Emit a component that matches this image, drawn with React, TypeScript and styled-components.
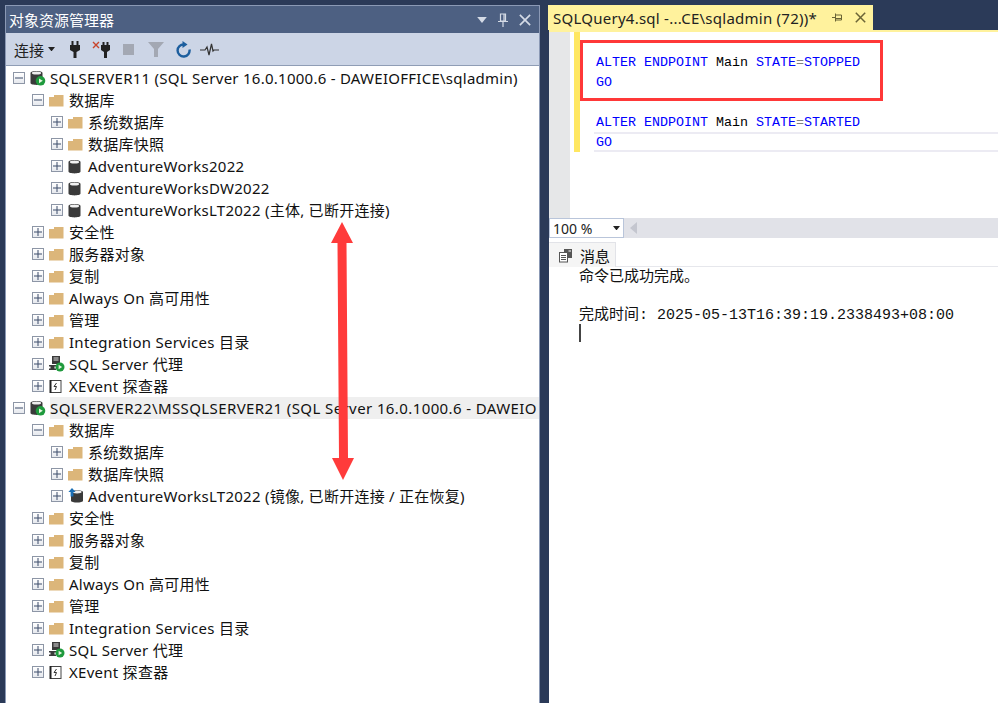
import React from "react";
import styled, { createGlobalStyle } from "styled-components";

const uiFont = `"Noto Sans", "Noto Sans CJK SC", sans-serif`;
const monoFont = `"Liberation Mono", "Noto Sans CJK SC", monospace`;

const GlobalStyle = createGlobalStyle`
  html, body {
    margin: 0;
    padding: 0;
    background: #2b3a58;
    overflow: hidden;
  }
  * { box-sizing: border-box; }
`;

const Page = styled.div`
  position: relative;
  width: 998px;
  height: 703px;
  background: #2b3a58;
  display: flex;
  padding: 5px 0 0 5px;
  gap: 8px;
  font-family: ${uiFont};
  color: #111;
  overflow: hidden;
`;

const LeftPanel = styled.div`
  width: 535px;
  height: 698px;
  flex: none;
  display: flex;
  flex-direction: column;
  border: 1px solid #8b99b5;
  border-bottom: none;
`;

const TitleBar = styled.div`
  height: 27px;
  flex: none;
  background: #4d6082;
  color: #fff;
  font-size: 15px;
  display: flex;
  align-items: center;
  padding: 0 8px 0 3px;
`;

const TitleText = styled.span`
  flex: 1;
`;

const TitleButtons = styled.div`
  display: flex;
  align-items: center;
  gap: 11px;
`;

const Toolbar = styled.div`
  height: 33px;
  flex: none;
  background: #ccd5e6;
  display: flex;
  align-items: center;
  padding-left: 8px;
  font-size: 15px;
  color: #222;
  border-bottom: 1px solid #8f9db5;
`;

const ConnectMenu = styled.div`
  display: flex;
  align-items: center;
  gap: 4px;
  margin-right: 6px;
`;

const ToolIcon = styled.div`
  width: 27px;
  height: 20px;
  display: flex;
  align-items: center;
  justify-content: center;
`;

const Tree = styled.div`
  flex: 1;
  background: #fff;
  padding-top: 1px;
  overflow: hidden;
`;

const Row = styled.div<{ $depth: number }>`
  height: 22px;
  display: flex;
  align-items: center;
  padding-left: ${(p) => 7 + p.$depth * 19}px;
  white-space: nowrap;
  font-size: 15px;
`;

const Expander = styled.span`
  width: 12px;
  height: 12px;
  flex: none;
  border: 1px solid #8d96a6;
  background: linear-gradient(#fff, #e6e9ee);
  display: flex;
  align-items: center;
  justify-content: center;
  margin-right: 5px;
`;

const NodeIcon = styled.span`
  width: 16px;
  height: 16px;
  flex: none;
  display: flex;
  align-items: center;
  justify-content: flex-start;
  margin-right: 4px;
`;

const Label = styled.span<{ $selected?: boolean }>`
  background: ${(p) => (p.$selected ? "#efefef" : "transparent")};
  height: 22px;
  line-height: 22px;
  letter-spacing: ${(p) => (p.$selected ? "0.4px" : "0.26px")};
  flex: ${(p) => (p.$selected ? 1 : "none")};
`;

const RightPanel = styled.div`
  flex: 1;
  min-width: 0;
  display: flex;
  flex-direction: column;
  margin-left: 1px;
`;

const TabStrip = styled.div`
  height: 27px;
  flex: none;
  display: flex;
  border-bottom: 2px solid #fff29d;
`;

const Tab = styled.div`
  width: 325px;
  height: 25px;
  margin-left: -1px;
  background: #fff29d;
  color: #222;
  font-size: 15px;
  letter-spacing: 0.25px;
  display: flex;
  align-items: center;
  padding: 0 7px 0 5px;
  white-space: nowrap;
`;

const TabTitle = styled.span`
  flex: 1;
`;

const TabButtons = styled.div`
  display: flex;
  align-items: center;
  gap: 12px;
`;

const Editor = styled.div`
  height: 186px;
  flex: none;
  display: flex;
  background: #fff;
`;

const Gutter = styled.div`
  width: 21px;
  flex: none;
  background: #e6e7e8;
`;

const Margin = styled.div`
  width: 24px;
  height: 120px;
  flex: none;
  padding-left: 4px;
`;

const ChangeBar = styled.div`
  width: 6px;
  height: 120px;
  background: #ffe761;
`;

const Code = styled.div`
  flex: 1;
  padding-top: 21px;
  font-family: ${monoFont};
  font-size: 13.33px;
  color: #00f;
`;

const CodeLine = styled.div`
  height: 20px;
  line-height: 20px;
  padding-left: 2px;
  white-space: pre;
`;

const CurrentLine = styled(CodeLine)`
  height: 20px;
  margin-top: -1px;
  border-top: 2px solid #ecebf3;
  border-bottom: 2px solid #ecebf3;
  line-height: 18px;
`;

const CodeGap = styled.div`
  height: 20px;
`;

const Plain = styled.span`
  color: #000;
`;

const Muted = styled.span`
  color: #808080;
`;

const ZoomBar = styled.div`
  height: 20px;
  flex: none;
  display: flex;
  background: #e1e2e8;
`;

const ZoomBox = styled.div`
  width: 75px;
  height: 20px;
  background: #fff;
  border: 1px solid #b9c5da;
  font-size: 14px;
  display: flex;
  align-items: center;
  justify-content: space-between;
  padding: 0 3px;
  color: #222;
`;

const ScrollArrow = styled.div`
  margin: 4px 0 0 6px;
  width: 0;
  height: 0;
  border-top: 6px solid transparent;
  border-bottom: 6px solid transparent;
  border-right: 7px solid #c4c6cf;
`;

const ResultTabs = styled.div`
  height: 29px;
  flex: none;
  padding-top: 4px;
  background: #fff;
  border-bottom: 1px solid #e6e7ec;
  display: flex;
`;

const ResultTab = styled.div`
  width: 67px;
  height: 25px;
  background: #f5f5f5;
  border-right: 1px solid #e2e3e8;
  border-top: 1px solid #e2e3e8;
  display: flex;
  align-items: center;
  gap: 7px;
  padding-left: 9px;
  font-size: 15px;
`;

const Results = styled.div`
  flex: 1;
  background: #fff;
  padding: 1px 0 0 30px;
  font-family: ${monoFont};
  font-size: 15px;
  color: #111;
`;

const ResultLine = styled.div`
  height: 19px;
  line-height: 19px;
  white-space: pre;
`;

const ResultSpacer = styled.div`
  height: 19px;
`;

const Caret = styled.div`
  width: 2px;
  height: 18px;
  margin-top: -1px;
  background: #444;
`;

const HighlightBox = styled.div`
  position: absolute;
  left: 580px;
  top: 40px;
  width: 303px;
  height: 61px;
  border: 3px solid #ff3838;
`;

const ArrowOverlay = styled.svg`
  position: absolute;
  left: 325px;
  top: 220px;
`;

const PlusMinus = ({ open }: { open: boolean }) => (
  <svg width="8" height="8" viewBox="0 0 8 8">
    <path d="M0 4h8" stroke="#3d4c6b" fill="none" />
    {!open && <path d="M4 0v8" stroke="#3d4c6b" fill="none" />}
  </svg>
);

const FolderIcon = () => (
  <svg width="15" height="13" viewBox="0 0 15 13">
    <path d="M0 3h5V1h9.500v11.500H0z" fill="#dcb67a" />
  </svg>
);

const DbIcon = () => (
  <svg width="13" height="15" viewBox="0 0 13 15">
    <path d="M.5 3C.5 .2 12.500 .2 12.500 3v9.500c0 2.500-12 2.500-12 0z" fill="#3a3a3a" />
    <ellipse cx="6.500" cy="3" rx="4.600" ry="1.500" fill="#f2f2f2" />
  </svg>
);

const ServerIcon = () => (
  <svg width="16" height="16" viewBox="0 0 16 16">
    <path d="M.5 3C.5 .2 12.500 .2 12.500 3v10c0 2.500-12 2.500-12 0z" fill="#3a3a3a" />
    <ellipse cx="6.500" cy="3" rx="4.600" ry="1.500" fill="#eee" />
    <circle cx="10.500" cy="10.800" r="4.800" fill="#1f9a3d" />
    <path d="M9 8.500v4.700l3.800-2.350z" fill="#e8f5e0" />
  </svg>
);

const MirrorDbIcon = () => (
  <svg width="16" height="16" viewBox="0 0 16 16">
    <path d="M3 4C3 1.600 15 1.600 15 4v8.800c0 2.400-12 2.400-12 0z" fill="#3a3a3a" />
    <ellipse cx="9" cy="4" rx="4.600" ry="1.400" fill="#eee" />
    <path d="M4 0L7.600 4H5.400v4.500H2.600V4H.4z" fill="#1b6fb5" />
  </svg>
);

const AgentIcon = () => (
  <svg width="16" height="16" viewBox="0 0 16 16">
    <rect x="3" y="0" width="8" height="8" fill="#3a3a3a" />
    <path d="M4.500 2h5M4.500 4h5" stroke="#ddd" />
    <path d="M0 9h7v1.500H5.500v2H7V14H0v-1.500h1.500v-2H0z" fill="#3a3a3a" />
    <circle cx="11" cy="11" r="4.500" fill="#1f9a3d" />
    <path d="M9.600 8.800v4.400l3.500-2.200z" fill="#e8f5e0" />
  </svg>
);

const XEventIcon = () => (
  <svg width="13" height="15" viewBox="0 0 13 15">
    <rect x="1.500" y="1.500" width="10.500" height="12" fill="#fff" stroke="#444" />
    <path d="M1.500 1v13" stroke="#222" strokeWidth="2" />
    <path d="M7.500 4L5 7.500h2.500L6 11" stroke="#333" fill="none" />
  </svg>
);

const PlugIcon = () => (
  <svg width="12" height="17" viewBox="0 0 12 17">
    <path d="M2.500 0h2v4h3V0h2v4H11v5L7.500 11v6h-3v-6L1 9V4h1.500z" fill="#222" />
  </svg>
);

const DisconnectIcon = () => (
  <svg width="20" height="17" viewBox="0 0 20 17">
    <path d="M1 1l6 6M7 1L1 7" stroke="#c8442b" strokeWidth="1.400" />
    <path d="M10.500 1h2v3h2V1h2v3H18v5l-3 2v6h-3v-6L9 9V4h1.500z" fill="#222" />
  </svg>
);

const StopIcon = () => (
  <svg width="11" height="11" viewBox="0 0 11 11">
    <rect width="11" height="11" fill="#a3a8b3" />
  </svg>
);

const FunnelIcon = () => (
  <svg width="16" height="16" viewBox="0 0 16 16">
    <path d="M0 1h16L10 8v8H6V8z" fill="#a3a8b3" />
  </svg>
);

const RefreshIcon = () => (
  <svg width="16" height="17" viewBox="0 0 16 17">
    <path d="M9 3.500a6 6 0 1 0 5.500 5" stroke="#1c5e9e" strokeWidth="2.400" fill="none" />
    <path d="M7.500 0v7l5-3.500z" fill="#1c5e9e" />
  </svg>
);

const ActivityIcon = () => (
  <svg width="19" height="13" viewBox="0 0 19 13">
    <path d="M0 7h5l2-3 2 8 2.500-11L13 8l1-1h5" stroke="#333" strokeWidth="1.200" fill="none" />
  </svg>
);

const CaretDown = ({ color, size }: { color: string; size: number }) => (
  <svg width={size} height={size / 2 + 1} viewBox="0 0 8 5">
    <path d="M0 0h8L4 5z" fill={color} />
  </svg>
);

const PinIcon = ({ color }: { color: string }) => (
  <svg width="10" height="14" viewBox="0 0 10 14">
    <path d="M2.500 1h5v7h-5zM0 8.500h10M5 9v5M6 1v7" stroke={color} fill="none" strokeWidth="1.200" />
  </svg>
);

const TabPinIcon = () => (
  <svg width="11" height="11" viewBox="0 0 11 11">
    <path d="M0 5.500h3M3.500 1.500v8M3.500 3h6v5h-6M3.500 6.500h6" stroke="#6b6436" fill="none" />
  </svg>
);

const CloseIcon = ({ color, size }: { color: string; size: number }) => (
  <svg width={size} height={size} viewBox="0 0 11 11">
    <path d="M.8 .8l9.400 9.400M10.200 .8L.8 10.200" stroke={color} strokeWidth="1.500" fill="none" />
  </svg>
);

const MessageIcon = () => (
  <svg width="15" height="15" viewBox="0 0 15 15">
    <rect x="6" y="1" width="8" height="9" fill="#555" />
    <rect x="1.500" y="4.500" width="8" height="9.500" fill="#fff" stroke="#555" />
    <path d="M3 7.500h5M3 9.500h5M3 11.500h5" stroke="#555" />
    <path d="M10.500 3h2.500" stroke="#fff" />
  </svg>
);

type Kind = "folder" | "db" | "server" | "mirror" | "agent" | "xevent";

type Node = {
  depth: number;
  open: boolean;
  kind: Kind;
  text: string;
  selected?: boolean;
};

const icons: Record<Kind, React.ReactNode> = {
  folder: <FolderIcon />,
  db: <DbIcon />,
  server: <ServerIcon />,
  mirror: <MirrorDbIcon />,
  agent: <AgentIcon />,
  xevent: <XEventIcon />,
};

const serverChildren: Node[] = [
  { depth: 1, open: false, kind: "folder", text: "安全性" },
  { depth: 1, open: false, kind: "folder", text: "服务器对象" },
  { depth: 1, open: false, kind: "folder", text: "复制" },
  { depth: 1, open: false, kind: "folder", text: "Always On 高可用性" },
  { depth: 1, open: false, kind: "folder", text: "管理" },
  { depth: 1, open: false, kind: "folder", text: "Integration Services 目录" },
  { depth: 1, open: false, kind: "agent", text: "SQL Server 代理" },
  { depth: 1, open: false, kind: "xevent", text: "XEvent 探查器" },
];

const nodes: Node[] = [
  { depth: 0, open: true, kind: "server", text: "SQLSERVER11 (SQL Server 16.0.1000.6 - DAWEIOFFICE\\sqladmin)" },
  { depth: 1, open: true, kind: "folder", text: "数据库" },
  { depth: 2, open: false, kind: "folder", text: "系统数据库" },
  { depth: 2, open: false, kind: "folder", text: "数据库快照" },
  { depth: 2, open: false, kind: "db", text: "AdventureWorks2022" },
  { depth: 2, open: false, kind: "db", text: "AdventureWorksDW2022" },
  { depth: 2, open: false, kind: "db", text: "AdventureWorksLT2022 (主体, 已断开连接)" },
  ...serverChildren,
  { depth: 0, open: true, kind: "server", text: "SQLSERVER22\\MSSQLSERVER21 (SQL Server 16.0.1000.6 - DAWEIO", selected: true },
  { depth: 1, open: true, kind: "folder", text: "数据库" },
  { depth: 2, open: false, kind: "folder", text: "系统数据库" },
  { depth: 2, open: false, kind: "folder", text: "数据库快照" },
  { depth: 2, open: false, kind: "mirror", text: "AdventureWorksLT2022 (镜像, 已断开连接 / 正在恢复)" },
  ...serverChildren,
];

export default function App() {
  return (
    <Page>
      <GlobalStyle />
      <LeftPanel>
        <TitleBar>
          <TitleText>对象资源管理器</TitleText>
          <TitleButtons>
            <CaretDown color="#d5dbe6" size={10} />
            <PinIcon color="#d5dbe6" />
            <CloseIcon color="#d5dbe6" size={12} />
          </TitleButtons>
        </TitleBar>
        <Toolbar>
          <ConnectMenu>
            连接
            <CaretDown color="#222" size={7} />
          </ConnectMenu>
          <ToolIcon><PlugIcon /></ToolIcon>
          <ToolIcon><DisconnectIcon /></ToolIcon>
          <ToolIcon><StopIcon /></ToolIcon>
          <ToolIcon><FunnelIcon /></ToolIcon>
          <ToolIcon><RefreshIcon /></ToolIcon>
          <ToolIcon><ActivityIcon /></ToolIcon>
        </Toolbar>
        <Tree>
          {nodes.map((n, i) => (
            <Row key={i} $depth={n.depth}>
              <Expander><PlusMinus open={n.open} /></Expander>
              <NodeIcon>{icons[n.kind]}</NodeIcon>
              <Label $selected={n.selected}>{n.text}</Label>
            </Row>
          ))}
        </Tree>
      </LeftPanel>
      <RightPanel>
        <TabStrip>
          <Tab>
            <TabTitle>SQLQuery4.sql -...CE\sqladmin (72))*</TabTitle>
            <TabButtons>
              <TabPinIcon />
              <CloseIcon color="#6b6436" size={11} />
            </TabButtons>
          </Tab>
        </TabStrip>
        <Editor>
          <Gutter />
          <Margin><ChangeBar /></Margin>
          <Code>
            <CodeLine>ALTER ENDPOINT <Plain>Main</Plain> STATE<Muted>=</Muted>STOPPED</CodeLine>
            <CodeLine>GO</CodeLine>
            <CodeGap />
            <CodeLine>ALTER ENDPOINT <Plain>Main</Plain> STATE<Muted>=</Muted>STARTED</CodeLine>
            <CurrentLine>GO</CurrentLine>
          </Code>
        </Editor>
        <ZoomBar>
          <ZoomBox>
            100 %
            <CaretDown color="#222" size={7} />
          </ZoomBox>
          <ScrollArrow />
        </ZoomBar>
        <ResultTabs>
          <ResultTab>
            <MessageIcon />
            消息
          </ResultTab>
        </ResultTabs>
        <Results>
          <ResultLine>命令已成功完成。</ResultLine>
          <ResultSpacer />
          <ResultLine>完成时间: 2025-05-13T16:39:19.2338493+08:00</ResultLine>
          <Caret />
        </Results>
      </RightPanel>
      <HighlightBox />
      <ArrowOverlay width="36" height="262" viewBox="0 0 36 262">
        <path
          d="M17 2L28 23H21.500L23 238H29L18 260L7 238H14L12.500 23H6z"
          fill="#ff3b3b"
        />
      </ArrowOverlay>
    </Page>
  );
}
